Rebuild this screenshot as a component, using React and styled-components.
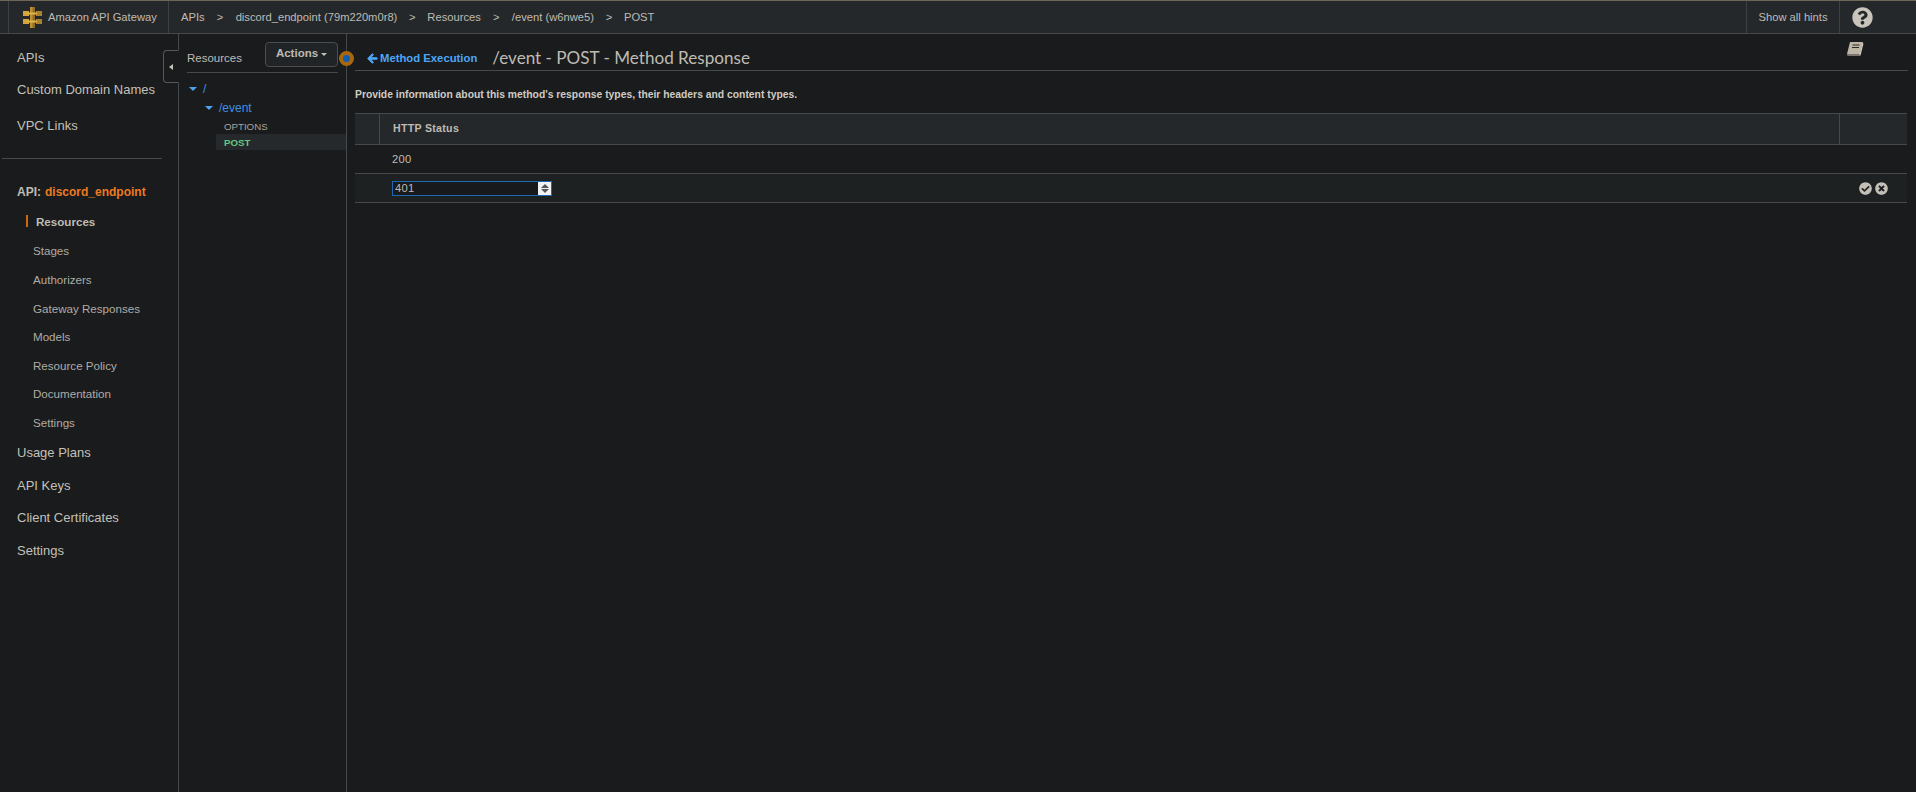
import React from "react";
import styled, { createGlobalStyle } from "styled-components";
import { FaArrowLeft, FaCheckCircle, FaTimesCircle, FaQuestionCircle } from "react-icons/fa";

const GlobalStyle = createGlobalStyle`
  html, body {
    margin: 0;
    height: 100%;
    background: #191b1d;
    overflow: hidden;
  }
  * {
    box-sizing: border-box;
  }
`;

const Page = styled.div`
  display: flex;
  flex-direction: column;
  width: 1916px;
  height: 792px;
  background: #191b1d;
  color: #bfbbb3;
  font-family: "Liberation Sans", Arial, sans-serif;
  font-size: 11.5px;
`;

const TopBar = styled.header`
  display: flex;
  align-items: stretch;
  height: 34px;
  flex: none;
  padding-left: 8px;
  background: #25282b;
  border-top: 1px solid #6e6557;
  border-bottom: 1px solid #45494c;
`;

const Brand = styled.div`
  display: flex;
  align-items: center;
  gap: 6px;
  width: 161px;
  padding-left: 14px;
  font-size: 11.2px;
  border-left: 1px solid #3d4144;
  border-right: 1px solid #3d4144;
`;

const Crumbs = styled.nav`
  display: flex;
  align-items: center;
  flex: 1;
  padding-left: 12px;
  font-size: 11.2px;
`;

const Crumb = styled.span`
  white-space: nowrap;
`;

const Sep = styled.span`
  width: ${props => props.$w}px;
  text-align: center;
  flex: none;
`;

const HintsButton = styled.div`
  display: flex;
  align-items: center;
  justify-content: center;
  width: 94px;
  font-size: 11.2px;
  border-left: 1px solid #3d4144;
  border-right: 1px solid #3d4144;
`;

const HelpSlot = styled.div`
  display: flex;
  align-items: center;
  width: 76px;
  padding-left: 12px;
  color: #c9c4bb;
  font-size: 21px;
`;

const Body = styled.div`
  display: flex;
  flex: 1;
  min-height: 0;
`;

const Sidebar = styled.aside`
  position: relative;
  width: 179px;
  flex: none;
  padding-top: 13px;
  border-right: 1px solid #45494c;
`;

const NavItem = styled.div`
  display: flex;
  align-items: center;
  height: ${props => props.$h}px;
  padding-left: 17px;
  font-size: 13px;
  color: #c4c0b8;
`;

const NavRule = styled.hr`
  width: 160px;
  margin: 19px 0 0 2px;
  border: 0;
  border-top: 1px solid #45494c;
`;

const ApiName = styled.div`
  display: flex;
  align-items: center;
  gap: 4px;
  height: 20px;
  margin-top: 23px;
  padding-left: 17px;
  font-size: 12px;
  font-weight: bold;
`;

const Orange = styled.span`
  color: #ec7a22;
`;

const SubNav = styled.div`
  margin-top: 5px;
  margin-bottom: 1px;
`;

const SubItem = styled.div`
  display: flex;
  align-items: center;
  height: 28.6px;
  padding-left: 33px;
  font-size: 11.6px;
  color: #b0aca5;
`;

const ActiveSubItem = styled(SubItem)`
  margin-bottom: 1px;
  padding-left: 26px;
  font-weight: bold;
  color: #bfbbb3;
  &::before {
    content: "";
    width: 2px;
    height: 12px;
    margin-right: 8px;
    background: #c96a10;
  }
`;

const CollapseTab = styled.div`
  position: absolute;
  top: 16px;
  right: -1px;
  display: flex;
  align-items: center;
  justify-content: center;
  width: 16px;
  height: 33px;
  background: #191b1d;
  border: 1px solid #55595c;
  border-right: 1px solid #191b1d;
  border-radius: 4px 0 0 4px;
  &::after {
    content: "";
    border-top: 3px solid transparent;
    border-bottom: 3px solid transparent;
    border-right: 4px solid #c4c0b8;
  }
`;

const TreePanel = styled.section`
  position: relative;
  width: 168px;
  flex: none;
  border-right: 1px solid #45494c;
`;

const TreeHead = styled.div`
  display: flex;
  align-items: center;
  justify-content: space-between;
  height: 33px;
  margin: 6px 8px 0 8px;
  padding: 7px 0 4px 0;
  border-bottom: 1px solid #45494c;
`;

const ActionsButton = styled.button`
  display: flex;
  align-items: center;
  justify-content: center;
  gap: 3px;
  width: 73px;
  height: 25px;
  margin-top: -7px;
  padding: 0 0 2px;
  color: #bfbbb3;
  font: bold 11.5px "Liberation Sans", Arial, sans-serif;
  background: #212427;
  border: 1px solid #4a4e51;
  border-radius: 4px;
  &::after {
    content: "";
    margin-top: 2px;
    border-left: 3px solid transparent;
    border-right: 3px solid transparent;
    border-top: 3px solid #c4c0b8;
  }
`;

const TreeRow = styled.div`
  display: flex;
  align-items: center;
  gap: 6px;
  height: 19px;
  padding-left: ${props => props.$indent}px;
  color: #3f8fe0;
  font-size: 12px;
  &::before {
    content: "";
    border-left: 4px solid transparent;
    border-right: 4px solid transparent;
    border-top: 4px solid #4da3f0;
  }
`;

const Tree = styled.div`
  padding-top: 6px;
`;

const MethodRow = styled.div`
  display: flex;
  align-items: center;
  height: 16px;
  margin-left: 37px;
  padding-left: 8px;
  font-size: 9.7px;
  background: ${props => (props.$active ? "#26292c" : "transparent")};
  color: ${props => (props.$active ? "#63cb7d" : "#a8a49d")};
  font-weight: ${props => (props.$active ? "bold" : "normal")};
`;

const MethodList = styled.div`
  padding-top: 1px;
`;

const Dot = styled.div`
  position: absolute;
  top: 17px;
  right: -8px;
  width: 15px;
  height: 15px;
  background: #0f5fb0;
  border: 4px solid #a8660f;
  border-radius: 50%;
`;

const Main = styled.main`
  flex: 1;
  padding: 0 9px 0 8px;
`;

const TitleBar = styled.div`
  position: relative;
  display: flex;
  align-items: center;
  height: 37px;
  margin-right: -1px;
  padding: 11px 0 0 12px;
  border-bottom: 1px solid #45494c;
`;

const BackLink = styled.a`
  display: flex;
  align-items: center;
  gap: 2px;
  margin: 1px 15px 0 0;
  color: #4ea6f5;
  font-size: 11.3px;
  font-weight: bold;
`;

const BackArrow = styled(FaArrowLeft)`
  stroke: currentColor;
  stroke-width: 40px;
`;

const Title = styled.h1`
  margin: 0;
  color: #bfbbb3;
  font-family: Lato, sans-serif;
  font-size: 17.1px;
  font-weight: 400;
  white-space: nowrap;
`;

const BookIcon = styled.svg`
  position: absolute;
  top: 7px;
  right: 44px;
`;

const Description = styled.p`
  margin: 17px 0 11px;
  height: 14px;
  font-size: 10.35px;
  font-weight: bold;
  line-height: 14px;
  color: #cfcbc4;
`;

const StatusTable = styled.div`
  display: grid;
  grid-template-columns: 24px 1fr 68px;
`;

const HeadCell = styled.div`
  display: flex;
  align-items: center;
  height: 32px;
  padding-left: ${props => props.$pad || 0}px;
  padding-bottom: 2px;
  background: #25282b;
  font-size: 10.6px;
  font-weight: bold;
  letter-spacing: 0.3px;
  border-top: 1px solid #45494c;
  border-bottom: 1px solid #45494c;
  border-left: ${props => (props.$divided ? "1px solid #45494c" : "0")};
`;

const Cell = styled.div`
  display: flex;
  align-items: center;
  height: 29px;
  padding-left: ${props => props.$pad || 0}px;
  font-size: 11.2px;
  letter-spacing: 0.3px;
  background: ${props => (props.$editing ? "#1e2122" : "transparent")};
  border-bottom: 1px solid #45494c;
`;

const NumberField = styled.div`
  display: flex;
  align-items: center;
  justify-content: space-between;
  width: 160px;
  height: 15px;
  padding: 0 0 0 2px;
  background: #17191b;
  border: 1px solid #1e68b4;
  font-size: 11.2px;
`;

const Spinner = styled.span`
  display: flex;
  flex-direction: column;
  align-items: center;
  justify-content: center;
  gap: 1px;
  width: 13px;
  height: 13px;
  background: #f2f2f2;
  &::before {
    content: "";
    border-left: 4px solid transparent;
    border-right: 4px solid transparent;
    border-bottom: 4px solid #555;
  }
  &::after {
    content: "";
    border-left: 4px solid transparent;
    border-right: 4px solid transparent;
    border-top: 4px solid #555;
  }
`;

const RowActions = styled(Cell)`
  justify-content: flex-end;
  gap: 3px;
  padding-right: 19px;
  color: #c4bfb6;
  font-size: 13px;
`;

function GatewayLogo() {
  return (
    <svg width="19" height="21" viewBox="0 0 19 21">
      <rect x="0" y="4" width="6" height="5" fill="#d3a53e" />
      <rect x="0" y="12" width="6" height="5" fill="#d3a53e" />
      <rect x="13" y="4" width="6" height="5" fill="#a98230" />
      <rect x="13" y="12" width="6" height="5" fill="#a98230" />
      <rect x="7" y="0" width="5" height="21" fill="#c09030" />
      <rect x="9.500" y="0" width="2.500" height="21" fill="#8f6f28" />
      <rect x="5" y="5.500" width="9" height="2" fill="#e0b64e" />
      <rect x="5" y="13.500" width="9" height="2" fill="#e0b64e" />
    </svg>
  );
}

function Book() {
  return (
    <BookIcon width="18" height="17" viewBox="0 0 18 17">
      <path d="M4 1h13l-3 12H1z" fill="#bdb5a6" />
      <path d="M1 13.500h12.500l3-11.500 1 .5-3 12H1.500z" fill="#d9d2c4" />
      <path d="M6.500 4h7M6 6.500h7" stroke="#2a2a2a" strokeWidth="1" />
    </BookIcon>
  );
}

const subItems = [
  "Stages",
  "Authorizers",
  "Gateway Responses",
  "Models",
  "Resource Policy",
  "Documentation",
  "Settings",
];

export default function App() {
  return (
    <Page>
      <GlobalStyle />
      <TopBar>
        <Brand>
          <GatewayLogo />
          Amazon API Gateway
        </Brand>
        <Crumbs>
          <Crumb>APIs</Crumb>
          <Sep $w={31}>&gt;</Sep>
          <Crumb>discord_endpoint (79m220m0r8)</Crumb>
          <Sep $w={30}>&gt;</Sep>
          <Crumb>Resources</Crumb>
          <Sep $w={31}>&gt;</Sep>
          <Crumb>/event (w6nwe5)</Crumb>
          <Sep $w={30}>&gt;</Sep>
          <Crumb>POST</Crumb>
        </Crumbs>
        <HintsButton>Show all hints</HintsButton>
        <HelpSlot>
          <FaQuestionCircle />
        </HelpSlot>
      </TopBar>
      <Body>
        <Sidebar>
          <NavItem $h={20}>APIs</NavItem>
          <NavItem $h={44}>Custom Domain Names</NavItem>
          <NavItem $h={28}>VPC Links</NavItem>
          <NavRule />
          <ApiName>
            API: <Orange>discord_endpoint</Orange>
          </ApiName>
          <SubNav>
            <ActiveSubItem>Resources</ActiveSubItem>
            {subItems.map(item => (
              <SubItem key={item}>{item}</SubItem>
            ))}
          </SubNav>
          <NavItem $h={30}>Usage Plans</NavItem>
          <NavItem $h={35}>API Keys</NavItem>
          <NavItem $h={30}>Client Certificates</NavItem>
          <NavItem $h={35}>Settings</NavItem>
          <CollapseTab />
        </Sidebar>
        <TreePanel>
          <TreeHead>
            <span>Resources</span>
            <ActionsButton>Actions</ActionsButton>
          </TreeHead>
          <Tree>
            <TreeRow $indent={10}>/</TreeRow>
            <TreeRow $indent={26}>/event</TreeRow>
            <MethodList>
              <MethodRow>OPTIONS</MethodRow>
              <MethodRow $active>POST</MethodRow>
            </MethodList>
          </Tree>
          <Dot />
        </TreePanel>
        <Main>
          <TitleBar>
            <BackLink>
              <BackArrow size={11} />
              Method Execution
            </BackLink>
            <Title>/event - POST - Method Response</Title>
            <Book />
          </TitleBar>
          <Description>
            Provide information about this method's response types, their headers and content types.
          </Description>
          <StatusTable>
            <HeadCell />
            <HeadCell $divided $pad={13}>HTTP Status</HeadCell>
            <HeadCell $divided />
            <Cell />
            <Cell $pad={13}>200</Cell>
            <Cell />
            <Cell $editing />
            <Cell $editing $pad={13}>
              <NumberField>
                401
                <Spinner />
              </NumberField>
            </Cell>
            <RowActions $editing>
              <FaCheckCircle />
              <FaTimesCircle />
            </RowActions>
          </StatusTable>
        </Main>
      </Body>
    </Page>
  );
}
